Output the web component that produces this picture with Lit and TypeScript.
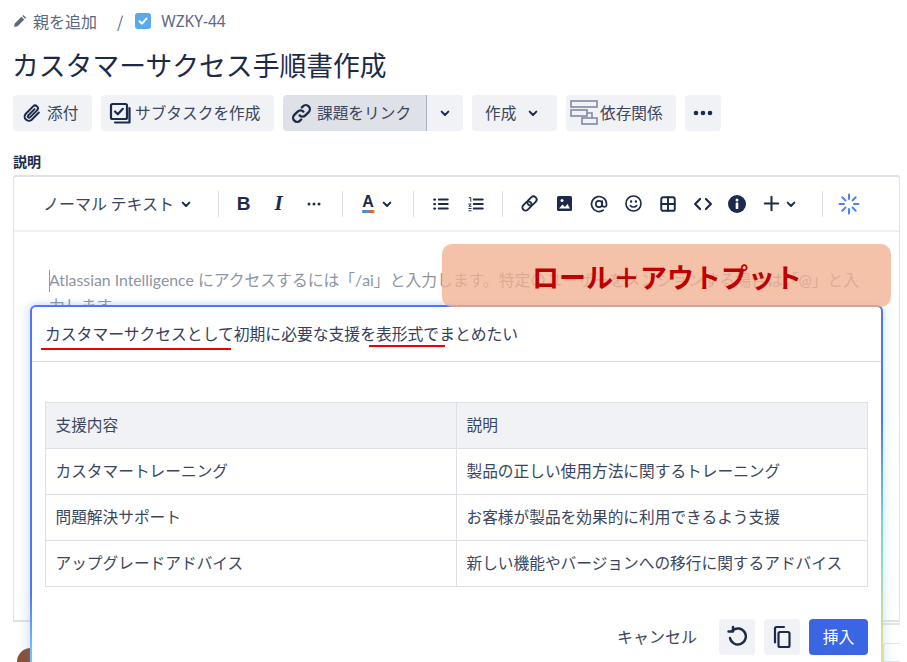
import { LitElement, html, css, svg } from "lit";
import { customElement } from "lit/decorators.js";

const ic = (size: number, body: unknown) => html`<svg class="ic" width=${size} height=${size} viewBox="0 0 24 24" fill="none" stroke="#1c2b4a" stroke-width="2" stroke-linecap="round" stroke-linejoin="round">${body}</svg>`;
const chevron = ic(16, svg`<path d="M7 10l5 5 5-5" stroke-width="3"/>`);

@customElement("app-root")
export class AppRoot extends LitElement {
  static styles = css`
    :host { display: block; width: 907px; height: 662px; overflow: hidden; position: relative; background: #fff; color: #2f3b55;
      font-family: "Noto Sans CJK JP", "Noto Sans", sans-serif; font-size: 15.7px; }
    .ic { display: block; flex: none; }
    .page { padding: 0 7px 0 13px; display: flex; flex-direction: column; }
    .crumbs { height: 44px; display: flex; align-items: center; gap: 6px; color: #5c6880; font-size: 16px; padding-bottom: 2px; box-sizing: border-box; }
    .crumbs .sep { margin: 0 6px 0 14px; }
    .crumbs .check { width: 16px; height: 16px; border-radius: 3px; background: #5aa9ec; display: flex; align-items: center; justify-content: center; margin-right: 4px; }
    .crumbs .key { font-family: "Noto Sans", sans-serif; font-size: 15.5px; }
    h1 { margin: 0 0 0 -1px; height: 42px; line-height: 42px; font-size: 26.8px; font-weight: 400; color: #1d2a47; white-space: nowrap; }
    .actions { display: flex; gap: 9px; margin-top: 9px; height: 36px; }
    .btn { display: flex; align-items: center; justify-content: center; gap: 5px; height: 36px; box-sizing: border-box; border-radius: 4px; background: #f0f2f5; color: #3a4660; white-space: nowrap; }
    .btn span { margin-bottom: 2px; }
    .btn.start { justify-content: flex-start; }
    .btn.active { background: #dfe1e8; border-radius: 4px 0 0 4px; border-right: 1px solid #aab0bd; }
    .btn.side { border-radius: 0 4px 4px 0; margin-left: -9px; }
    .label { margin-top: 20px; height: 20px; line-height: 20px; font-size: 14px; font-weight: 700; color: #1d2a47; }
    .editor { margin-top: 4px; height: 447px; box-sizing: border-box; border: 1px solid #dfe2e8; border-top-width: 2px; border-bottom-width: 2px; border-radius: 3px 3px 0 0; }
    .toolbar { height: 55px; display: flex; align-items: center; border-bottom: 2px solid #eff0f3; color: #3a4660; box-sizing: border-box; }
    .tstyle { display: flex; align-items: center; gap: 4px; margin-left: 29px; width: 175px; font-size: 16px; white-space: nowrap; box-sizing: border-box; }
    .tstyle span { margin-bottom: 2px; }
    .div { width: 1px; height: 26px; background: #dcdfe6; flex: none; }
    .tgroup { display: flex; align-items: center; flex: none; }
    .tb { width: 35px; display: flex; justify-content: center; align-items: center; flex: none; }
    .tb.n { width: 34.7px; }
    .glyph { font-family: "Liberation Sans", sans-serif; font-weight: 700; color: #1c2b4a; font-size: 19px; line-height: 1; }
    .it { font-style: italic; font-family: "Liberation Serif", serif; font-size: 21px; }
    .a-ic { display: flex; flex-direction: column; align-items: center; width: 14px; }
    .a-ic i { display: block; width: 13px; height: 3px; border-radius: 2px; background: linear-gradient(90deg, #6b5be0, #36a3d9 40%, #e4572e 70%, #f0a030); }
    .a-ic .glyph { font-size: 16px; }
    .body { padding: 35px 34px 0 35px; color: #8d94a3; font-family: "Lato", "Noto Sans CJK JP", sans-serif; font-size: 15.8px; line-height: 26px; position: relative; }
    .body::before { content: ""; position: absolute; left: 35px; top: 38px; width: 1px; height: 22px; background: #6d9bed; }
    .after { position: absolute; right: 7px; top: 623px; width: 17px; height: 22px; border-top: 2px solid #e3e5ea; box-sizing: border-box; }
    .after2 { position: absolute; right: 7px; top: 643px; width: 17px; height: 19px; border: 1px solid #e3e5ea; border-right: none; border-radius: 3px 0 0 0; box-sizing: border-box; }
    .avatar { position: absolute; left: 17px; top: 648px; width: 28px; height: 28px; border-radius: 50%; background: #8a5136; }
    .modal { position: absolute; left: 30px; top: 305px; width: 853px; height: 380px; box-sizing: border-box; border: 2px solid transparent; border-radius: 6px 6px 0 0;
      background:
        linear-gradient(#fff,#fff) padding-box,
        linear-gradient(180deg, #4f78f0 0 76%, #70c4f0 91%) left top / 50% 100% no-repeat border-box,
        linear-gradient(180deg, #4f78f0 0 30%, #7ccce0 57%, #b5dcaa 78%, #e5dca0 91%) right top / 50% 100% no-repeat border-box;
      box-shadow: -5px 0 9px rgba(90,130,245,.14), 5px 0 9px rgba(150,215,225,.2), 0 -2px 5px rgba(90,130,245,.12); }
    .prompt { height: 55px; padding: 0 0 2px 13px; box-sizing: border-box; display: flex; align-items: center; border-bottom: 1px solid #dcdee3; color: #33405a; font-size: 15.8px; white-space: nowrap; }
    .tablewrap { padding: 40px 13px 0 13px; }
    table { width: 823px; border-collapse: collapse; table-layout: fixed; font-size: 15.7px; color: #3a4660; }
    td, th { height: 46px; padding: 0 9px 2px 9.5px; border: 1px solid #dcdfe6; text-align: left; font-weight: 400; box-sizing: border-box; white-space: nowrap; }
    th { background: #f0f2f5; }
    .foot { display: flex; justify-content: flex-end; align-items: center; gap: 9px; padding: 32px 13px 0 0; font-size: 15.8px; }
    .cancel { margin: 0 13px 2px 0; color: #3a4660; font-size: 16px; }
    .sq { width: 36px; }
    .insert { width: 59px; height: 36px; padding-bottom: 2px; box-sizing: border-box; border-radius: 4px; background: #3a66e3; color: #fff; display: flex; align-items: center; justify-content: center; }
    .callout { position: absolute; left: 442px; top: 244px; width: 449px; height: 63px; border-radius: 10px; background: rgba(241,177,145,.78); box-sizing: border-box; padding: 12px 0 0 90px; color: #c00000; font-weight: 700; font-size: 27px; line-height: 42px; white-space: nowrap; }
    .ul { position: absolute; height: 2px; background: #f00000; }
    .ul.a { left: 41px; top: 348px; width: 190px; }
    .ul.b { left: 369px; top: 345px; width: 76px; }
  `;

  render() {
    return html`
      <div class="page">
        <div class="crumbs">
          <svg class="ic" width="14" height="14" viewBox="0 0 14 14"><path d="M1 13l.8-3.6 6.6-6.6 2.8 2.8-6.6 6.6z M9.3 1.9l1-1 2.8 2.8-1 1z" fill="#5c6880"/></svg>
          <span>親を追加</span>
          <span class="sep">/</span>
          <span class="check"><svg width="12" height="12" viewBox="0 0 12 12" fill="none" stroke="#fff" stroke-width="2" stroke-linecap="round" stroke-linejoin="round"><path d="M2.5 6.2l2.4 2.4 4.6-5"/></svg></span>
          <span class="key">WZKY-44</span>
        </div>
        <h1>カスタマーサクセス手順書作成</h1>
        <div class="actions">
          <div class="btn start" style="width:79px;padding-left:8px;gap:4px">
            ${ic(22, svg`<path d="M19.5 11.5l-7.8 7.8a4.6 4.6 0 0 1-6.5-6.5l8-8a3 3 0 0 1 4.3 4.3l-7.7 7.7a1.4 1.4 0 0 1-2-2l7-7" stroke-width="2.2"/>`)}
            <span>添付</span>
          </div>
          <div class="btn start" style="width:173px;padding-left:7px;gap:3px">
            ${ic(24, svg`<rect x="3" y="3" width="16" height="15" rx="1.5" stroke-width="2.2"/><path d="M7 10.5l2.8 2.8 5-5.5" stroke-width="2.2"/><path d="M7 21.5h14.5V7" stroke-width="2.2"/>`)}
            <span>サブタスクを作成</span>
          </div>
          <div class="btn start active" style="width:144px;padding-left:7px;gap:4px">
            ${ic(23, svg`<path d="M10 14a4.2 4.2 0 0 0 6 0l3.5-3.5a4.2 4.2 0 0 0-6-6l-1.2 1.2M14 10a4.2 4.2 0 0 0-6 0l-3.5 3.5a4.2 4.2 0 0 0 6 6l1.2-1.2" stroke-width="2.4"/>`)}
            <span>課題をリンク</span>
          </div>
          <div class="btn side" style="width:36px">${chevron}</div>
          <div class="btn start" style="width:85px;padding-left:13px;gap:9px"><span>作成</span>${chevron}</div>
          <div class="btn start" style="width:110px;padding-left:4px;gap:1px">
            <svg class="ic" width="29" height="26" viewBox="0 0 29 26" fill="none" stroke="#8089a0" stroke-width="1.6"><rect x="1" y="1" width="26" height="6"/><rect x="1" y="10" width="16" height="6"/><rect x="12" y="18" width="15" height="6"/><path d="M17 13h5v5"/></svg>
            <span>依存関係</span>
          </div>
          <div class="btn" style="width:36px">
            <svg width="20" height="6" viewBox="0 0 20 6" fill="#1c2b4a"><circle cx="3" cy="3" r="2.3"/><circle cx="10" cy="3" r="2.3"/><circle cx="17" cy="3" r="2.3"/></svg>
          </div>
        </div>
        <div class="label">説明</div>
        <div class="editor">
          <div class="toolbar">
            <div class="tstyle"><span>ノーマル テキスト</span>${chevron}</div>
            <div class="div"></div>
            <div class="tgroup" style="margin-left:7px;width:116px">
              <span class="tb"><span class="glyph">B</span></span>
              <span class="tb"><span class="glyph it">I</span></span>
              <span class="tb"><svg width="14" height="4" viewBox="0 0 14 4" fill="#1c2b4a"><circle cx="2" cy="2" r="1.5"/><circle cx="7" cy="2" r="1.5"/><circle cx="12" cy="2" r="1.5"/></svg></span>
            </div>
            <div class="div"></div>
            <div class="tgroup" style="margin-left:18px;gap:4px;width:52px">
              <span class="a-ic"><span class="glyph">A</span><i></i></span>
              ${chevron}
            </div>
            <div class="div"></div>
            <div class="tgroup" style="margin-left:9px;width:70px">
              <span class="tb">${ic(18, svg`<path d="M9 6h12M9 12h12M9 18h12" stroke-width="2.6"/><path d="M3 6h1M3 12h1M3 18h1" stroke-width="3"/>`)}</span>
              <span class="tb">${ic(18, svg`<path d="M9 6h12M9 12h12M9 18h12" stroke-width="2.6"/><path d="M3 3.5h2v5M2.5 12h3l-3 3h3M2.5 18h3M2.5 21h3" stroke-width="1.3"/>`)}</span>
            </div>
            <div class="div" style="margin-left:9px"></div>
            <div class="tgroup" style="margin-left:9px">
              <span class="tb n">${ic(19, svg`<g transform="rotate(-45 12 12)"><rect x="1" y="8" width="13" height="8" rx="4" stroke-width="2.4"/><rect x="10" y="8" width="13" height="8" rx="4" stroke-width="2.4"/></g>`)}</span>
              <span class="tb n"><svg width="15" height="15" viewBox="0 0 15 15"><rect width="15" height="15" rx="1.5" fill="#1c2b4a"/><path d="M2 12.5l3.5-4 2.5 2.5 2.5-3 2.5 4.500z" fill="#fff"/><circle cx="5" cy="4.5" r="1.5" fill="#fff"/></svg></span>
              <span class="tb n">${ic(20, svg`<circle cx="12" cy="12" r="3.8"/><path d="M15.8 8.5v5a2.7 2.7 0 0 0 5.2 0V12a9 9 0 1 0-4 7.5"/>`)}</span>
              <span class="tb n">${ic(19, svg`<circle cx="12" cy="12" r="9.5"/><path d="M8 14.5a5 5 0 0 0 8 0"/><path d="M9 9.5h.01M15 9.5h.01" stroke-width="3"/>`)}</span>
              <span class="tb n">${ic(18, svg`<rect x="3" y="3" width="18" height="18" rx="2.5" stroke-width="2.6"/><path d="M12 3v18M3 12h18" stroke-width="2.6"/>`)}</span>
              <span class="tb n">${ic(20, svg`<path d="M8.5 6l-6 6 6 6M15.5 6l6 6-6 6" stroke-width="2.6"/>`)}</span>
              <span class="tb n"><svg width="18" height="18" viewBox="0 0 18 18"><circle cx="9" cy="9" r="9" fill="#1c2b4a"/><rect x="7.7" y="7.5" width="2.6" height="6.5" rx=".6" fill="#fff"/><circle cx="9" cy="5" r="1.5" fill="#fff"/></svg></span>
              <span class="tb" style="width:auto;gap:2px;margin-left:7px">${ic(19, svg`<path d="M12 3.5v17M3.5 12h17" stroke-width="2.6"/>`)}${chevron}</span>
            </div>
            <div class="div" style="margin-left:23px"></div>
            <span class="tb" style="margin-left:9px"><svg width="22" height="22" viewBox="0 0 22 22" fill="none" stroke="#4d82f5" stroke-width="2" stroke-linecap="round"><path d="M11 1.5v4.5M11 16v4.5M1.5 11H6M16 11h4.5M4.3 4.3l3.2 3.2M14.5 14.5l3.2 3.2M17.7 4.3l-3.2 3.2M7.5 14.5l-3.2 3.2"/></svg></span>
          </div>
          <div class="body">Atlassian Intelligence にアクセスするには「/ai」と入力します。特定のユーザーをメンションする場合は「@」と入力します。</div>
        </div>
      </div>
      <div class="after"></div>
      <div class="after2"></div>
      <div class="avatar"></div>
      <div class="modal">
        <div class="prompt">カスタマーサクセスとして初期に必要な支援を表形式でまとめたい</div>
        <div class="tablewrap">
          <table>
            <colgroup><col style="width:411px" /><col /></colgroup>
            <tr><th>支援内容</th><th>説明</th></tr>
            <tr><td>カスタマートレーニング</td><td>製品の正しい使用方法に関するトレーニング</td></tr>
            <tr><td>問題解決サポート</td><td>お客様が製品を効果的に利用できるよう支援</td></tr>
            <tr><td>アップグレードアドバイス</td><td>新しい機能やバージョンへの移行に関するアドバイス</td></tr>
          </table>
        </div>
        <div class="foot">
          <span class="cancel">キャンセル</span>
          <div class="btn sq">${ic(24, svg`<path d="M7.5 5.5A8 8 0 1 1 5 13" stroke-width="2.4"/><path d="M8 2v4.5H3.5" stroke-width="2.4"/>`)}</div>
          <div class="btn sq">${ic(24, svg`<rect x="8.5" y="7" width="11" height="15" rx="1.5" stroke-width="2.2"/><path d="M5 17.5V3.5a1.5 1.5 0 0 1 1.5-1.5H14" stroke-width="2.2"/>`)}</div>
          <div class="insert">挿入</div>
        </div>
      </div>
      <div class="callout">ロール＋アウトプット</div>
      <div class="ul a"></div>
      <div class="ul b"></div>
    `;
  }
}
